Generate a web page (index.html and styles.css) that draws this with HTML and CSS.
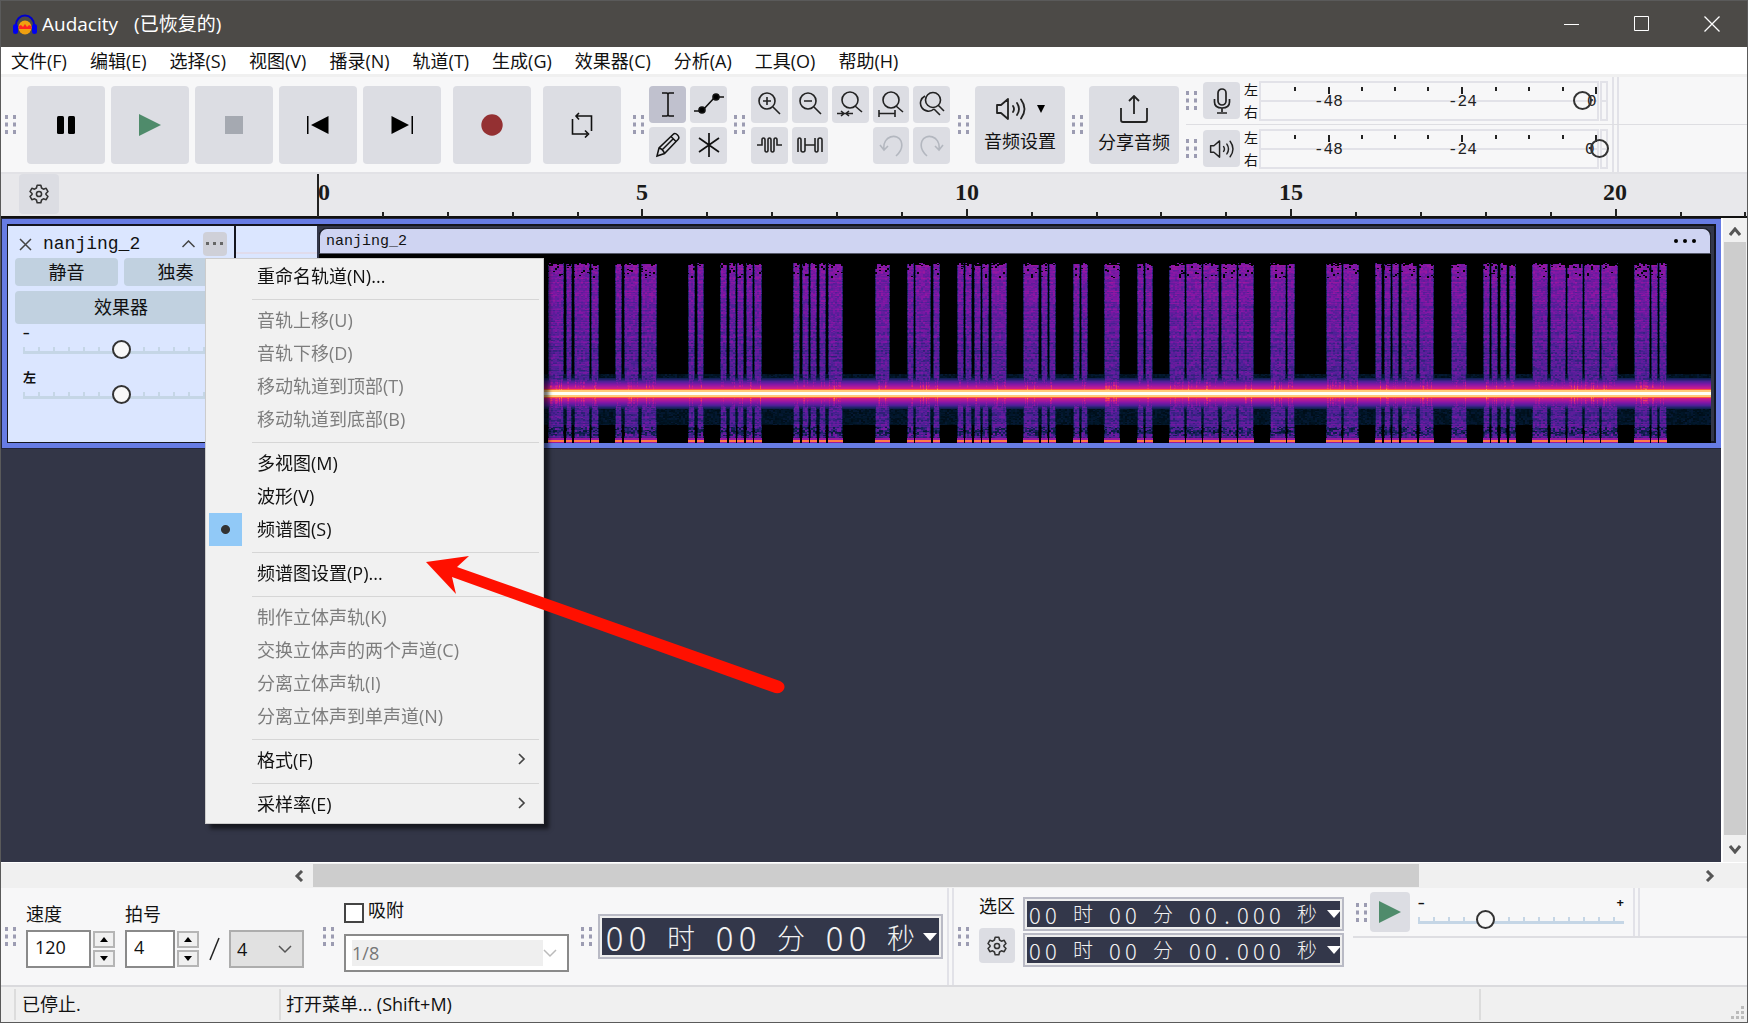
FILE: index.html
```html
<!DOCTYPE html>
<html lang="zh-CN">
<head>
<meta charset="utf-8">
<title>Audacity (已恢复的)</title>
<link rel="stylesheet" href="styles.css">
</head>
<body>
<svg class="defs" aria-hidden="true">
  <symbol id="grip" viewBox="0 0 11 19"><path fill="#9c9cb2" d="M0 0h3v4H0zM8 0h3v4H8zM0 7.500h3v4H0zM8 7.500h3v4H8zM0 15h3v4H0zM8 15h3v4H8z"/></symbol>
  <symbol id="gear" viewBox="0 0 24 24"><path fill="none" stroke="#333" stroke-width="1.700" stroke-linejoin="round" d="M10 2.500h4l.8 3 2 1.200 3-.9 2 3.500-2.200 2.200v1l2.200 2.200-2 3.500-3-.9-2 1.200-.8 3h-4l-.8-3-2-1.200-3 .9-2-3.500 2.200-2.200v-1L2.200 9.300l2-3.500 3 .9 2-1.200z"/><circle cx="12" cy="12" r="2.800" fill="none" stroke="#333" stroke-width="1.700"/></symbol>
  <symbol id="speaker" viewBox="0 0 32 26"><path fill="none" stroke="#222" stroke-width="1.800" stroke-linejoin="round" stroke-linecap="round" d="M2 9v8h4l7 6V3L6 9zM18 10q2 3 0 6M22 7q4 6 0 12M26 3.500q7 9.500 0 19"/></symbol>
  <symbol id="down" viewBox="0 0 14 8"><path fill="#fff" d="M0 0h14L7 8z"/></symbol>
</svg>

<header class="titlebar">
  <svg class="logo" width="24" height="21" viewBox="0 0 24 21"><path d="M3 13V11a9 9.500 0 0 1 18 0v2" fill="none" stroke="#00c" stroke-width="2"/><ellipse cx="12" cy="13.500" rx="6.500" ry="7" fill="#f0a010"/><path d="M6 12l2-1 2 2 2-3 2 3 2-2 2 1v3H6z" fill="#f22"/><rect x="0" y="10" width="5" height="10" rx="2.500" fill="#00e"/><rect x="19" y="10" width="5" height="10" rx="2.500" fill="#00e"/></svg>
  <h1>Audacity<span>(已恢复的)</span></h1>
  <div class="window-buttons">
    <button aria-label="最小化"><svg width="16" height="16"><path d="M0 8.500h15" stroke="#fff"/></svg></button>
    <button aria-label="最大化"><svg width="16" height="16"><path d="M.5.5h14v14H.5z" stroke="#fff" fill="none"/></svg></button>
    <button aria-label="关闭"><svg width="16" height="16"><path d="M.5.5l15 15M15.500.5l-15 15" stroke="#fff" stroke-width="1.300"/></svg></button>
  </div>
</header>

<nav class="menubar">
  <button>文件(F)</button><button>编辑(E)</button><button>选择(S)</button><button>视图(V)</button><button>播录(N)</button><button>轨道(T)</button><button>生成(G)</button><button>效果器(C)</button><button>分析(A)</button><button>工具(O)</button><button>帮助(H)</button>
</nav>

<section class="toolbar" aria-label="工具栏">
  <svg class="grip"><use href="#grip"/></svg>
  <div class="transport">
    <button aria-label="暂停"><svg width="20" height="20"><rect x="1" y="1" width="7" height="18" rx="1.500"/><rect x="12" y="1" width="7" height="18" rx="1.500"/></svg></button>
    <button aria-label="播放"><svg width="22" height="22"><path d="M0 0l22 11L0 22z" fill="#4f8b6b"/></svg></button>
    <button aria-label="停止"><svg width="18" height="18"><path d="M0 0h18v18H0z" fill="#a5a9b1"/></svg></button>
    <button aria-label="跳到开头"><svg width="22" height="20"><path d="M0 1h1.500v18H0zM21.500 1v18L4 10z"/></svg></button>
    <button aria-label="跳到结尾"><svg width="22" height="20"><path d="M20.500 1H22v18h-1.500zM.5 1v18L18 10z"/></svg></button>
    <button class="apart" aria-label="录制"><svg width="22" height="22"><circle cx="11" cy="11" r="10.700" fill="#943032"/></svg></button>
    <button class="apart" aria-label="循环"><svg width="24" height="26" viewBox="0 0 24 26" fill="none" stroke="#111" stroke-width="1.600"><path d="M7 4h14.500v15M9 1L6 4l3 3.500M17 22H2.500V7M15 18.500l3.500 3.500-3.500 3.500"/></svg></button>
  </div>
  <svg class="grip"><use href="#grip"/></svg>
  <div class="tools">
    <button class="on" aria-label="选择工具"><svg width="26" height="26" fill="none" stroke="#111" stroke-width="1.600"><path d="M7 2h5l1 1 1-1h5M7 25h5l1-1 1 1h5M13 3v21"/></svg></button>
    <button aria-label="包络工具"><svg width="30" height="24" stroke="#111" stroke-width="1.600"><path fill="none" d="M0 19h8L21 5h9"/><circle cx="8" cy="18" r="3"/><circle cx="22" cy="5" r="3"/></svg></button>
    <button aria-label="绘制工具"><svg width="26" height="26" fill="none" stroke="#111" stroke-width="1.500"><path d="M2 24l2-8L18 2.500q2-2 4.500.5t.5 4.500L9.500 21.500zM4 16q4 1 5.500 5.500M16 4.500l5 5M18 7L7 18"/></svg></button>
    <button aria-label="多功能工具"><svg width="24" height="26" stroke="#111" stroke-width="1.700"><path d="M12 1v24M2 6l20 14M22 6L2 20"/></svg></button>
  </div>
  <svg class="grip"><use href="#grip"/></svg>
  <div class="edit">
    <button aria-label="放大"><svg class="ln" viewBox="0 0 26 26"><circle cx="11" cy="10" r="8"/><path d="M17 16l7 7M7 10h8M11 6v8"/></svg></button>
    <button aria-label="缩小"><svg class="ln" viewBox="0 0 26 26"><circle cx="11" cy="10" r="8"/><path d="M17 16l7 7M7 10h8"/></svg></button>
    <button aria-label="适合选区"><svg class="ln" viewBox="0 0 26 26"><circle cx="13" cy="9" r="8"/><path d="M18 15l7 6M0 22.500h16M4 20l3 2.500L4 25M12 20l-3 2.500 3 2.500"/></svg></button>
    <button aria-label="适合项目"><svg class="ln" viewBox="0 0 26 26"><circle cx="13" cy="9" r="8"/><path d="M18 15l7 6M1 22.500h16M1 19v7M17 19v7"/></svg></button>
    <button aria-label="缩放切换"><svg class="ln" viewBox="0 0 26 26"><circle cx="14" cy="9" r="7.500"/><path d="M19 14l6 6M6 5a8 8 0 1 0 9 13M15 18l6 6"/></svg></button>
    <button aria-label="修剪"><svg class="ln" viewBox="0 0 26 26"><path d="M1 13h5V8q0-2 1.500-2T9 8v10q0 2 1.500 2t1.500-2V8q0-2 1.500-2T15 8v10q0 2 1.500 2t1.500-2V8q0-2 1.500-2T21 8v5h5"/></svg></button>
    <button aria-label="静默"><svg class="ln" viewBox="0 0 26 26"><path d="M1 20V8q0-2 1.500-2T4 8v10q0 2 2 2t2-2V6M8 13h10M18 6v12q0 2 1.500 2t1.500-2V8q0-2 2-2t2 2v12"/></svg></button>
    <span></span>
    <button disabled aria-label="撤销"><svg class="ln" viewBox="0 0 26 26"><path d="M2 13l4 5 4-4M6 18C4 3 20 1 23 9q3 8-5 15"/></svg></button>
    <button disabled aria-label="重做"><svg class="ln" viewBox="0 0 26 26"><path d="M24 13l-4 5-4-4M20 18C22 3 6 1 3 9q-3 8 5 15"/></svg></button>
  </div>
  <svg class="grip"><use href="#grip"/></svg>
  <button class="wide"><span class="pair"><svg width="32" height="26"><use href="#speaker"/></svg><svg width="8" height="8"><path d="M0 0h8L4 8z"/></svg></span>音频设置</button>
  <svg class="grip"><use href="#grip"/></svg>
  <button class="wide"><svg width="28" height="28" fill="none" stroke="#222" stroke-width="1.800"><path d="M1 13v12q0 2 2 2h22q2 0 2-2V13M14 19V2M9 6l5-5 5 5"/></svg>分享音频</button>
  <div class="meters">
    <div class="meter">
      <svg class="grip"><use href="#grip"/></svg>
      <button aria-label="录音电平"><svg width="18" height="26" fill="none" stroke="#222" stroke-width="1.700"><rect x="5" y="1" width="8" height="16" rx="4"/><path d="M1.500 11v3q0 6 7.500 6t7.500-6v-3M9 20v4M4 25h10"/></svg></button>
      <div class="lr"><span>左</span><span>右</span></div>
      <div class="level">
        <svg width="350" height="40"><g fill="none" stroke="#e2e2e8" stroke-width="2"><path d="M1 1h338v38H1zM1 20h338M342 1h6v38h-6zM342 20h6"/></g><path stroke="#222" stroke-width="2" d="M36 6v4M70 6v7M103 6v4M136 6v4M169 6v4M203 6v7M237 6v4M270 6v4M304 6v4M337 6v7"/><g class="db"><text x="55" y="25">-48</text><text x="189" y="25">-24</text><text x="328" y="25">0</text></g></svg>
        <input type="range" aria-label="录音音量" min="0" max="100" value="95">
      </div>
      <i class="vsep"></i>
    </div>
    <div class="meter">
      <svg class="grip"><use href="#grip"/></svg>
      <button aria-label="播放电平"><svg width="26" height="22"><use href="#speaker"/></svg></button>
      <div class="lr"><span>左</span><span>右</span></div>
      <div class="level">
        <svg width="350" height="40"><g fill="none" stroke="#e2e2e8" stroke-width="2"><path d="M1 1h338v38H1zM1 20h338M342 1h6v38h-6zM342 20h6"/></g><path stroke="#222" stroke-width="2" d="M36 6v4M70 6v7M103 6v4M136 6v4M169 6v4M203 6v7M237 6v4M270 6v4M304 6v4M337 6v7"/><g class="db"><text x="55" y="25">-48</text><text x="189" y="25">-24</text><text x="326" y="25">0</text></g></svg>
        <input type="range" aria-label="播放音量" min="0" max="100" value="100">
      </div>
      <i class="vsep"></i>
    </div>
  </div>
</section>

<div class="ruler">
  <button aria-label="时间轴选项"><svg width="22" height="22"><use href="#gear"/></svg></button>
  <svg class="scale" height="43"><path stroke="#222" stroke-width="2" d="M1 0v43M66 38v5M131 38v5M196 38v5M261 38v5M325 35v8M390 38v5M455 38v5M520 38v5M585 38v5M650 35v8M715 38v5M780 38v5M844 38v5M909 38v5M974 35v8M1039 38v5M1104 38v5M1169 38v5M1234 38v5M1299 35v8M1364 38v5M1428 38v5"/><g><text x="7" y="26">0</text><text x="325" y="26">5</text><text x="650" y="26">10</text><text x="974" y="26">15</text><text x="1298" y="26">20</text></g></svg>
</div>

<main class="workspace">
  <div class="tracks">
    <div class="track">
      <div class="panel">
        <div class="panel-head">
          <button aria-label="关闭轨道"><svg width="13" height="13"><path d="M1 1l11 11M12 1L1 12" stroke="#444" stroke-width="1.500"/></svg></button>
          <span>nanjing_2</span>
          <button aria-label="折叠"><svg width="13" height="8"><path d="M.5 7L6.500 1l6 6" fill="none" stroke="#444" stroke-width="1.500"/></svg></button>
          <button class="more" aria-label="轨道菜单"><svg width="20" height="4"><path d="M1 0h3v3H1zM8 0h3v3H8zM15 0h3v3h-3z" fill="#666"/></svg></button>
        </div>
        <div class="two"><button>静音</button><button>独奏</button></div>
        <button class="fx">效果器</button>
        <div class="slider"><div><span>–</span><span>+</span></div><input type="range" aria-label="增益"></div>
        <div class="slider"><div><span>左</span><span>右</span></div><input type="range" aria-label="声像"></div>
      </div>
      <div class="vruler"></div>
      <div class="clip">
        <div class="clip-head"><span>nanjing_2</span><svg width="22" height="6"><circle cx="2" cy="3" r="2"/><circle cx="11" cy="3" r="2"/><circle cx="20" cy="3" r="2"/></svg></div>
        <canvas id="spectrum" height="189"></canvas>
      </div>
    </div>
  </div>
  <div class="vscroll">
    <svg width="12" height="9"><path d="M1 8l5-6 5 6" fill="none" stroke="#555" stroke-width="3"/></svg>
    <i></i>
    <svg width="12" height="9"><path d="M1 1l5 6 5-6" fill="none" stroke="#555" stroke-width="3"/></svg>
  </div>

  <div class="popup" role="menu">
    <button role="menuitem">重命名轨道(N)...</button>
    <hr>
    <button role="menuitem" disabled>音轨上移(U)</button>
    <button role="menuitem" disabled>音轨下移(D)</button>
    <button role="menuitem" disabled>移动轨道到顶部(T)</button>
    <button role="menuitem" disabled>移动轨道到底部(B)</button>
    <hr>
    <button role="menuitem">多视图(M)</button>
    <button role="menuitem">波形(V)</button>
    <button role="menuitem" class="checked">频谱图(S)</button>
    <hr>
    <button role="menuitem">频谱图设置(P)...</button>
    <hr>
    <button role="menuitem" disabled>制作立体声轨(K)</button>
    <button role="menuitem" disabled>交换立体声的两个声道(C)</button>
    <button role="menuitem" disabled>分离立体声轨(I)</button>
    <button role="menuitem" disabled>分离立体声到单声道(N)</button>
    <hr>
    <button role="menuitem" class="sub">格式(F)<svg width="8" height="12"><path d="M1 1l5 5-5 5" fill="none" stroke="#444" stroke-width="1.700"/></svg></button>
    <hr>
    <button role="menuitem" class="sub">采样率(E)<svg width="8" height="12"><path d="M1 1l5 5-5 5" fill="none" stroke="#444" stroke-width="1.700"/></svg></button>
  </div>
  <svg class="arrow" width="360" height="140"><path fill="#ff1000" d="M0 6L43 0 31 11 354 125q6 3 4 8-2 5-9 4L26 21 30 38z"/></svg>
</main>

<div class="hscroll">
  <svg width="10" height="12"><path d="M8 1L3 6l5 5" fill="none" stroke="#555" stroke-width="3"/></svg>
  <div><i></i></div>
  <svg width="10" height="12"><path d="M2 1l5 5-5 5" fill="none" stroke="#555" stroke-width="3"/></svg>
</div>

<section class="bottom" aria-label="底部工具栏">
  <svg class="grip"><use href="#grip"/></svg>
  <div class="tempo">
    <label for="bpm">速度</label>
    <div class="spin"><input id="bpm" class="bpm" value="120"><span><button aria-label="增加"><svg width="8" height="5"><path d="M0 5l4-5 4 5z"/></svg></button><button aria-label="减少"><svg width="8" height="5"><path d="M0 0l4 5 4-5z"/></svg></button></span></div>
  </div>
  <div class="tempo">
    <label for="beats">拍号</label>
    <div class="spin"><input id="beats" value="4"><span><button aria-label="增加"><svg width="8" height="5"><path d="M0 5l4-5 4 5z"/></svg></button><button aria-label="减少"><svg width="8" height="5"><path d="M0 0l4 5 4-5z"/></svg></button></span>
      <svg class="slash" width="11" height="24"><path d="M1 23L10 1" stroke="#222" stroke-width="1.500"/></svg>
      <div class="drop denom"><select aria-label="拍号分母"><option>4</option></select><svg width="14" height="9"><path d="M1 1l6 6 6-6" fill="none" stroke="#555" stroke-width="1.500"/></svg></div>
    </div>
  </div>
  <svg class="grip"><use href="#grip"/></svg>
  <div class="snap">
    <label><input type="checkbox">吸附</label>
    <div class="drop"><select disabled aria-label="吸附到"><option>1/8</option></select><svg width="14" height="9"><path d="M1 1l6 6 6-6" fill="none" stroke="#bbb" stroke-width="1.500"/></svg></div>
  </div>
  <svg class="grip"><use href="#grip"/></svg>
  <div class="time big">
    <span class="n"><b>0</b><b>0</b></span><span>时</span><span class="n"><b>0</b><b>0</b></span><span>分</span><span class="n"><b>0</b><b>0</b></span><span>秒</span>
    <button aria-label="时间格式"><svg width="14" height="8"><use href="#down"/></svg></button>
  </div>
  <i class="vsep"></i>
  <svg class="grip"><use href="#grip"/></svg>
  <div class="sel-label"><span>选区</span><button aria-label="选区设置"><svg width="22" height="22"><use href="#gear"/></svg></button></div>
  <div class="sel-times">
    <div class="time"><span class="n"><b>0</b><b>0</b></span><span>时</span><span class="n"><b>0</b><b>0</b></span><span>分</span><span class="n"><b>0</b><b>0</b><b>.</b><b>0</b><b>0</b><b>0</b></span><span>秒</span><button aria-label="时间格式"><svg width="14" height="8"><use href="#down"/></svg></button></div>
    <div class="time"><span class="n"><b>0</b><b>0</b></span><span>时</span><span class="n"><b>0</b><b>0</b></span><span>分</span><span class="n"><b>0</b><b>0</b><b>.</b><b>0</b><b>0</b><b>0</b></span><span>秒</span><button aria-label="时间格式"><svg width="14" height="8"><use href="#down"/></svg></button></div>
  </div>
  <div class="speed">
    <svg class="grip"><use href="#grip"/></svg>
    <button aria-label="按速度播放"><svg width="22" height="22"><path d="M0 0l22 11L0 22z" fill="#4f8b6b"/></svg></button>
    <div class="slider"><div><span>–</span><span>+</span></div><input type="range" aria-label="播放速度" min="0" max="100" value="31"></div>
    <i class="vsep"></i>
  </div>
</section>

<footer class="status"><span>已停止.</span><span>打开菜单... (Shift+M)</span><span><svg width="14" height="14"><path d="M10 0h3v3h-3zM5 5h3v3H5zM10 5h3v3h-3zM0 10h3v3H0zM5 10h3v3H5zM10 10h3v3h-3z" fill="#bbb"/></svg></span></footer>
<script src="spectrum.js"></script>
</body>
</html>
```
FILE: styles.css
```css
* { box-sizing: border-box; }

body {
  margin: 0;
  height: 100vh;
  display: flex;
  flex-direction: column;
  overflow: hidden;
  border: 1px solid #5a5a5a;
  background: #f7f7f8;
  color: #111;
  font: 18px "Open Sans", "Noto Sans CJK SC", sans-serif;
}

button {
  display: flex;
  align-items: center;
  justify-content: center;
  padding: 0;
  border: 0;
  border-radius: 4px;
  background: #dcdde3;
  color: inherit;
  font: inherit;
}

svg { display: block; flex: none; }
.defs { position: absolute; width: 0; height: 0; }
.grip { width: 11px; height: 19px; }

/* Title bar and menus */
.titlebar {
  display: flex;
  align-items: center;
  height: 46px;
  flex: none;
  padding-left: 12px;
  background: #4c4a47;
  color: #fff;
}
.titlebar h1 { margin: 0 auto 0 5px; padding-bottom: 3px; font-size: 19px; font-weight: 400; }
.titlebar h1 span { margin-left: 16px; }
.window-buttons { display: flex; }
.window-buttons button { width: 70px; height: 46px; background: none; }

.menubar {
  display: flex;
  flex: none;
  height: 30px;
  background: #fff;
  border-bottom: 3px solid #f0f0f0;
}
.menubar button { padding: 0 12px 2px 11px; background: none; white-space: nowrap; }
.menubar button:first-child { padding-left: 10px; }

/* Top toolbar */
.toolbar {
  display: flex;
  align-items: center;
  flex: none;
  height: 97px;
  padding-left: 4px;
  border-bottom: 2px solid #e2e2e6;
}
.transport { display: flex; gap: 6px; margin: 0 12px 0 11px; }
.transport button { width: 78px; height: 78px; }
.transport .apart { margin-left: 6px; }
.tools, .edit {
  display: grid;
  grid-template-columns: repeat(2, 37px);
  grid-auto-rows: 37px;
  gap: 4px;
  margin: 0 7px 0 5px;
}
.edit { grid-template-columns: repeat(5, 1fr); width: 199px; margin: 0 8px 0 6px; }
.tools .on { background: #c0c1ce; }
.ln { width: 26px; height: 26px; fill: none; stroke: #222; stroke-width: 1.6; }
button:disabled .ln { stroke: #b3b7bf; }
.wide {
  flex-direction: column;
  gap: 5px;
  flex: none;
  width: 90px;
  height: 78px;
  margin: 0 7px 0 6px;
}
.wide .pair { display: flex; align-items: center; gap: 10px; }

.meters { flex: 1; min-width: 0; align-self: stretch; display: flex; flex-direction: column; }
.meter { display: flex; align-items: center; flex: 1; }
.meter + .meter { border-top: 1px solid #dedee2; }
.meter button { width: 37px; height: 37px; margin: 0 4px 0 6px; }
.lr { display: flex; flex-direction: column; gap: 8px; font-size: 14px; line-height: 14px; }
.level { display: grid; align-items: center; margin-left: 1px; }
.level > * { grid-area: 1 / 1; }
.level input { width: 350px; height: 18px; }
.db text { font: 16px "Liberation Mono", monospace; fill: #222; }
.vsep {
  flex: none;
  align-self: stretch;
  width: 7px;
  margin-left: 3px;
  border: 2px solid #e2e2e8;
  border-width: 0 2px;
}

input[type="range"] { appearance: none; margin: 0; background: none; }
input[type="range"]::-webkit-slider-thumb {
  appearance: none;
  width: 19px;
  height: 19px;
  border: 2px solid #333;
  border-radius: 50%;
  background: #f8f8f8;
}
.level input::-webkit-slider-thumb { background: none; }

/* Timeline ruler */
.ruler {
  display: flex;
  flex: none;
  height: 44px;
  padding-left: 18px;
  background: #e8e8eb;
  border-bottom: 2px solid #111;
}
.ruler button { width: 40px; height: 40px; margin-right: 258px; flex: none; }
.scale { flex: 1; min-width: 0; }
.scale text { font: bold 24px "Liberation Serif", serif; fill: #1a1a1a; text-anchor: middle; }

/* Track area */
.workspace { position: relative; flex: 1; min-height: 0; display: flex; background: #333647; }
.tracks { flex: 1; min-width: 0; padding: 1px 0 0 1px; }
.track {
  display: flex;
  height: 229px;
  border: 5px solid #677ce4;
  outline: 1px solid #23253a;
  background: #33374a;
  box-shadow: inset 0 0 0 2px #14151f;
}
.panel {
  width: 229px;
  margin: 2px 0 1px;
  padding: 6px 7px 0;
  border: solid #14151f;
  border-width: 0 2px 0 1px;
  background: #dbe6ff;
}
.panel-head { display: flex; align-items: center; height: 24px; padding-left: 4px; }
.panel-head button { background: none; }
.panel-head span { margin: 0 auto 0 11px; font: 18px "Liberation Mono", monospace; }
.panel-head .more { width: 24px; height: 24px; margin-left: 8px; background: #cfd0d8; }
.two { display: grid; grid-template-columns: 1fr 1fr; gap: 6px; margin: 2px 0 5px; }
.two button { height: 28px; padding-bottom: 3px; background: #c1d1e0; }
.fx { width: 100%; height: 33px; padding-bottom: 3px; background: #c1d1e0; }
.slider { width: 197px; margin: 2px 0 0 8px; }
.slider > div { display: flex; justify-content: space-between; height: 14px; font-size: 13px; line-height: 12px; font-weight: 700; }
.slider input {
  display: block;
  width: 100%;
  height: 19px;
  background:
    linear-gradient(#c5d6e6, #c5d6e6) 0 11px / 100% 3px no-repeat,
    repeating-linear-gradient(90deg, #c5d6e6 0 2px, transparent 2px 15px) 0 7px / 100% 5px no-repeat;
}
.slider + .slider { margin-top: 12px; }
.vruler { width: 81px; margin: 2px 0; background: linear-gradient(#dbe6ff 26px, #e0dcec 26px, #e0dcec 28px, #dbe6ff 28px); }
.clip { flex: 1; min-width: 0; margin: 4px 5px 0 2px; background: #000; display: flex; flex-direction: column; border-radius: 8px 8px 0 0; }
.clip-head {
  display: flex;
  align-items: center;
  justify-content: space-between;
  height: 26px;
  padding: 0 14px 0 6px;
  border: 1px solid #22242f;
  border-bottom-color: #555868;
  border-radius: 8px 8px 0 0;
  background: #cfd4f2;
  font: 15px "Liberation Mono", monospace;
}
#spectrum { width: 100%; height: 189px; display: block; }

.vscroll {
  display: flex;
  flex-direction: column;
  align-items: center;
  justify-content: space-between;
  width: 26px;
  padding: 9px 0 8px;
  border-left: 2px solid #fff;
  background: #f0f0f0;
}
.vscroll i { flex: 1; width: 22px; margin: 6px 0 10px; background: #cdcdcd; }
.hscroll {
  display: flex;
  align-items: center;
  gap: 9px;
  flex: none;
  height: 26px;
  padding: 0 32px 0 293px;
  border-top: 1px solid #fff;
  background: #f0f0f0;
}
.hscroll div { flex: 1; height: 23px; }
.hscroll i { display: block; width: 80%; height: 100%; background: #cdcdcd; }

/* Track context menu */
.popup {
  position: absolute;
  left: 204px;
  top: 40px;
  width: 339px;
  padding: 1px 3px 2px;
  border: 1px solid #ccc;
  background: #f1f1f1;
  box-shadow: 5px 5px 4px rgba(0, 0, 0, 0.55);
}
.popup button {
  width: 100%;
  height: 33px;
  justify-content: flex-start;
  padding: 0 0 3px 48px;
  border-radius: 0;
  background: none;
  color: #111;
}
.popup button:disabled { color: #7d7d7d; }
.popup hr { height: 1px; margin: 6px 1px 4px 43px; border: 0; background: #d6d6d6; }
.popup .sub { justify-content: space-between; padding-right: 14px; }
.popup .checked { padding-left: 0; }
.popup .checked::before {
  content: "";
  width: 33px;
  height: 33px;
  margin: 2px 15px 0 0;
  background: radial-gradient(circle, #333 4px, #91c9f7 5px);
}
.arrow { position: absolute; left: 425px; top: 338px; }

/* Bottom toolbars */
.bottom {
  display: flex;
  align-items: center;
  flex: none;
  height: 99px;
  padding-left: 4px;
  border-bottom: 2px solid #dadadd;
}
.tempo { margin-left: 10px; align-self: flex-start; padding-top: 13px; }
.tempo label { display: block; height: 29px; line-height: 26px; }
.spin { display: flex; align-items: center; }
.spin input {
  width: 50px;
  height: 38px;
  padding: 0 0 4px 7px;
  border: 2px solid #8a8a8a;
  background: #fff;
  color: #111;
  font: inherit;
}
.spin .bpm { width: 65px; }
.spin > span { display: grid; gap: 2px; margin-left: 2px; }
.spin button { width: 22px; height: 17px; border: 2px solid #b5b5b5; border-radius: 0; background: #f0f0f0; }
.slash { margin: 0 9px 0 10px; }
.drop { display: grid; grid-template-columns: 1fr 24px; align-items: center; height: 38px; border: 2px solid #8a8a8a; background: #fff; padding-left: 6px; }
.drop select { height: 26px; appearance: none; border: 0; padding: 0; background: #efefef; color: #777; opacity: 1; font: inherit; }
.denom { width: 75px; border-color: #adadad; background: #e1e1e1; }
.denom select { background: none; color: #111; }
.bottom .tempo + .grip { margin-left: 19px; }
.snap { width: 225px; margin: 0 12px 0 10px; }
.snap label { display: flex; align-items: flex-start; gap: 4px; height: 33px; line-height: 18px; }
.snap input { appearance: none; width: 20px; height: 20px; margin: 2px 0 0; border: 2px solid #444; background: #fff; }

.time {
  display: flex;
  align-items: center;
  gap: 14px;
  width: 321px;
  height: 34px;
  padding-left: 2px;
  border: 2px solid #b9bac5;
  outline: 2px solid #eee;
  outline-offset: -4px;
  background: #33374a;
  color: #f2f2f2;
  font: 300 20px/28px "Noto Sans CJK SC", sans-serif;
}
.time .n { display: flex; font-size: 22px; }
.time b { width: 16px; font-weight: 300; text-align: center; }
.time button { background: none; margin: 0 auto 0 -4px; }
.time.big { flex: none; gap: 18px; width: 345px; height: 45px; margin-left: 6px; padding-left: 3px; font-size: 28px; line-height: 38px; }
.big .n { font-size: 33px; }
.big b { width: 23px; }
.big button { margin-left: -10px; }
.big + .vsep { margin: 0 4px 0 4px; }
.sel-label { display: grid; gap: 10px; width: 36px; margin: 0 8px 16px 10px; line-height: 24px; }
.sel-label button { height: 35px; }
.sel-times { display: grid; gap: 2px; flex: none; margin-bottom: 9px; }
.speed {
  display: flex;
  align-items: center;
  align-self: flex-start;
  flex: 1;
  height: 50px;
  margin-left: 9px;
  padding-left: 3px;
  border-bottom: 2px solid #dedee2;
}
.speed button { width: 40px; height: 40px; margin-left: 3px; }
.speed .slider { width: 206px; margin: 0 6px 0 8px; }

.status { display: flex; flex: none; height: 35px; padding: 2px 0 2px 13px; background: #f0f0f0; line-height: 31px; }
.status span { width: 265px; padding-left: 6px; border-left: 2px solid #dcdcdc; }
.status span:nth-child(2) { flex: 1; padding-left: 5px; }
.status span:last-child { display: flex; align-items: flex-end; justify-content: flex-end; width: 268px; padding-right: 2px; }
```
FILE: spectrum.js
```javascript
// Start and end of each tone burst, in pixels from the start of the clip.
const bursts = [
  [229,244],[247,252],[255,270],[272,279],[296,302],[305,319],[322,337],[369,375],[378,384],
  [401,407],[410,416],[418,424],[427,433],[435,442],[474,480],[483,489],[491,497],[500,506],[509,523],
  [556,570],[588,594],[596,611],[614,620],[638,644],[646,652],[655,661],[663,669],[672,687],
  [704,719],[722,728],[730,736],[754,760],[762,768],[785,800],[818,824],[826,833],
  [850,865],[867,882],[884,899],[902,917],[919,934],[951,966],[968,975],[1007,1022],[1024,1039],
  [1056,1062],[1065,1071],[1073,1079],[1082,1097],[1100,1114],[1132,1147],[1164,1170],[1172,1178],
  [1181,1187],[1190,1196],[1213,1228],[1231,1246],[1248,1263],[1265,1280],[1282,1298],
  [1315,1330],[1332,1338],[1340,1347]
];
const stops = [
  [0,0,0,0],[.12,0,22,40],[.25,24,34,96],[.34,76,32,150],[.45,132,22,166],
  [.6,205,28,140],[.72,255,90,60],[.85,255,190,90],[1,255,255,245]
];
function colour(v) {
  v = Math.max(0, Math.min(1, v));
  let i = 1;
  while (stops[i][0] < v) i++;
  const a = stops[i - 1], b = stops[i], t = (v - a[0]) / (b[0] - a[0]);
  return [1, 2, 3].map(k => a[k] + (b[k] - a[k]) * t);
}
let seed = 7;
function rnd() {
  seed = (seed * 1664525 + 1013904223) >>> 0;
  return seed / 4294967296;
}
const canvas = document.getElementById('spectrum');
canvas.width = canvas.clientWidth;
const w = canvas.width, h = canvas.height, mid = 139;
const ctx = canvas.getContext('2d');
const img = ctx.createImageData(w, h);
const inside = new Uint8Array(w);
bursts.forEach(([s, e]) => {
  for (let x = s; x <= e && x < w; x++) inside[x] = x === s || x === e ? 2 : 1;
});
const flare = Array.from({ length: w }, () => rnd());
const speck = new Float32Array(w);
for (let y = 0; y < h; y++) {
  const row = (rnd() - .5) * .07;
  for (let x = 0; x < w; x += 2) {
    if (y % 2 === 0 || rnd() > .6) speck[x] = speck[x + 1] = rnd() - .5;
  }
  for (let x = 0; x < w; x++) {
    const grain = speck[x];
    const d = Math.abs(y - mid);
    let v;
    if (d < 2) v = 1;
    else if (d < 4) v = .88;
    else if (d < 5) v = .72;
    else if (d < 16) v = .6 - (d - 5) * .037;
    else if (d < 20 || (y > mid && d < 32)) v = .11 + grain * .08;
    else v = 0;
    if (inside[x] && y >= 10 + grain * 3) {
      let b = .45 - .1 * Math.min(1, y / 120) + row + grain * .1;
      if (inside[x] === 2) b -= .14;
      if (y < 24 && grain > .42) b = .03;
      if (y > 172 && y < 182) b += grain * .16 - .06;
      if (y > 183) b = .5;
      if (y > 185 && y < 188) b = .76;
      if (d < 14 && d > 3 && flare[x] > .5) b += (14 - d) * .04 * flare[x];
      v = Math.max(v, b);
    }
    const p = (y * w + x) * 4, c = colour(v);
    img.data[p] = c[0];
    img.data[p + 1] = c[1];
    img.data[p + 2] = c[2];
    img.data[p + 3] = 255;
  }
}
ctx.putImageData(img, 0, 0);
```
